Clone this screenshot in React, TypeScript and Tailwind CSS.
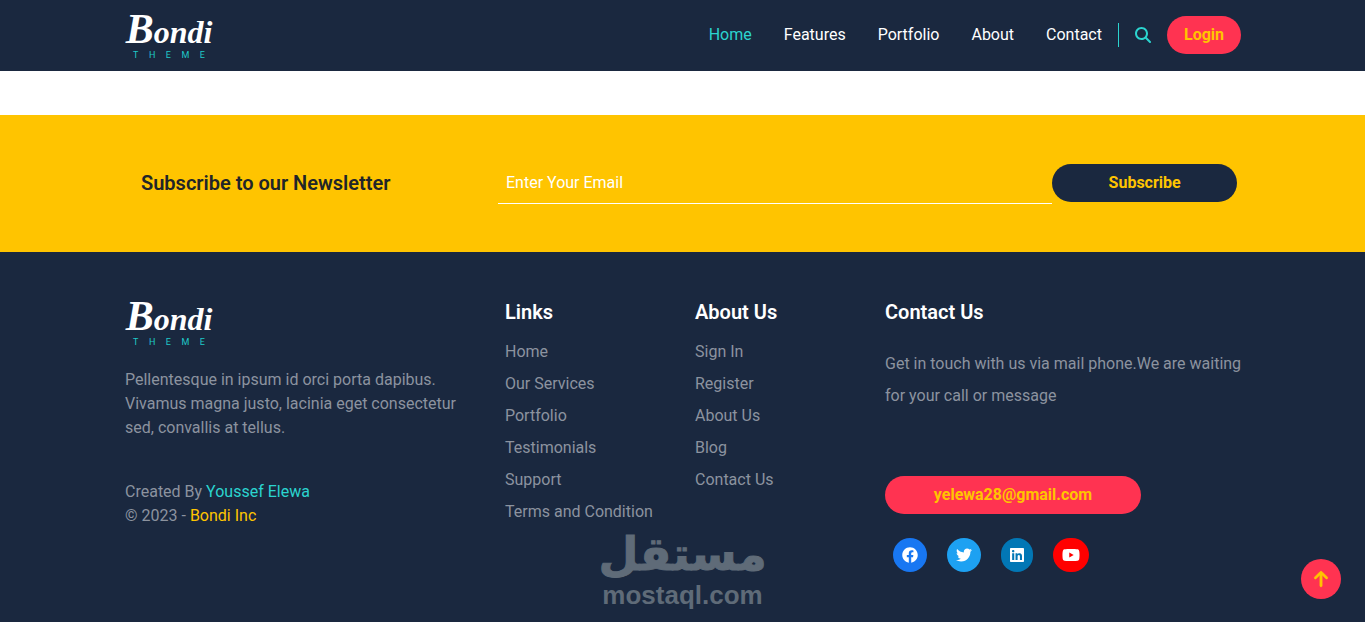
import React from "react";
import { FaFacebook, FaTwitter, FaLinkedin, FaYoutube } from "react-icons/fa";
import { FaMagnifyingGlass, FaArrowUp } from "react-icons/fa6";

const navItems = ["Home", "Features", "Portfolio", "About", "Contact"];
const links = ["Home", "Our Services", "Portfolio", "Testimonials", "Support", "Terms and Condition"];
const about = ["Sign In", "Register", "About Us", "Blog", "Contact Us"];
const socials = [
  { name: "Facebook", Icon: FaFacebook, button: "bg-[#1877f2]", icon: "w-4" },
  { name: "Twitter", Icon: FaTwitter, button: "bg-[#1da1f2]", icon: "w-4" },
  { name: "LinkedIn", Icon: FaLinkedin, button: "bg-[#0277b5]", icon: "w-3.5" },
  { name: "YouTube", Icon: FaYoutube, button: "bg-[#ff0000]", icon: "w-[18px]" },
];

function Logo() {
  return (
    <a href="#home" className="flex w-[88px] flex-col items-center">
      <span className="h-9 font-['Brush_Script_MT','Liberation_Serif',serif] text-[32px] leading-8 font-bold text-white italic">
        <span className="text-[42px] leading-8">B</span>ondi
      </span>
      <span aria-label="Theme" className="flex w-[72px] justify-between text-[9px] leading-3 text-[#1fc8c8]">
        {["T", "H", "E", "M", "E"].map((letter, i) => (
          <span key={i}>{letter}</span>
        ))}
      </span>
    </a>
  );
}

function LinkColumn({ title, items }: { title: string; items: string[] }) {
  return (
    <div className="col-span-2 px-3">
      <h2 className="mb-3 text-xl leading-6 font-semibold text-white">{title}</h2>
      <ul>
        {items.map((item) => (
          <li key={item} className="h-8 whitespace-nowrap py-1">
            <a href="#" className="hover:text-white">{item}</a>
          </li>
        ))}
      </ul>
    </div>
  );
}

export default function App() {
  return (
    <div className="flex min-h-screen flex-col bg-white font-['Roboto',sans-serif] text-base leading-6">
      <header className="bg-[#1a283f]">
        <div className="mx-auto flex max-w-[1141px] items-start justify-between pt-[13px] pr-3 pb-[10px] pl-[13px]">
          <Logo />
          <div className="mt-[3px] flex items-center gap-4">
            <nav className="flex gap-8">
              {navItems.map((item) => (
                <a key={item} href="#" className={item === "Home" ? "text-[#2bd4cf]" : "text-white"}>
                  {item}
                </a>
              ))}
            </nav>
            <span className="h-6 w-px bg-[#2bd4cf]" />
            <button aria-label="Search" className="text-[#2bd4cf]">
              <FaMagnifyingGlass className="size-4" />
            </button>
            <button className="h-[38px] rounded-full bg-[#ff3351] px-[17px] font-bold text-[#ffc400]">Login</button>
          </div>
        </div>
      </header>

      <section className="mt-11 bg-[#ffc400] py-12">
        <div className="mx-auto flex max-w-[1141px] items-start pr-4 pl-[29px]">
          <h2 className="mt-2 w-[357px] text-xl leading-6 font-semibold text-[#212529]">
            <label htmlFor="email">Subscribe to our Newsletter</label>
          </h2>
          <form className="flex flex-1 items-center">
            <input
              id="email"
              type="email"
              placeholder="Enter Your Email"
              className="h-[41px] w-3/4 border-b border-white bg-transparent px-2 pb-0.5 text-white outline-none placeholder:text-white"
            />
            <button
              type="button"
              className="mb-0.5 h-[38px] w-1/4 rounded-full bg-[#1a283f] font-bold text-[#ffc400]"
            >
              Subscribe
            </button>
          </form>
        </div>
      </section>

      <footer className="relative flex-1 bg-[#1a283f] pt-12 pb-10 text-[#8c939f]">
        <div className="mx-auto grid max-w-[1141px] grid-cols-12 pl-px">
          <div className="col-span-4 px-3">
            <Logo />
            <p className="mt-5">
              Pellentesque in ipsum id orci porta dapibus. Vivamus magna justo, lacinia eget consectetur sed, convallis at
              tellus.
            </p>
            <p className="mt-10">
              Created By <a href="#" className="text-[#2bd4cf]">Youssef Elewa</a>
            </p>
            <p>
              © 2023 - <a href="#" className="text-[#ffc400]">Bondi Inc</a>
            </p>
          </div>
          <LinkColumn title="Links" items={links} />
          <LinkColumn title="About Us" items={about} />
          <div className="col-span-4 pl-3">
            <h2 className="text-xl leading-6 font-semibold text-white">Contact Us</h2>
            <p className="mt-6 leading-8">
              Get in touch with us via mail phone.We are waiting for your call or message
            </p>
            <a
              href="mailto:yelewa28@gmail.com"
              className="mt-16 flex h-[38px] w-64 items-center justify-center rounded-full bg-[#ff3351] font-bold text-[#ffc400]"
            >
              yelewa28@gmail.com
            </a>
            <div className="mt-6 flex gap-5 px-2 text-white">
              {socials.map(({ name, Icon, button, icon }) => (
                <a key={name} href="#" aria-label={name} className={`rounded-full p-[9px] ${button}`}>
                  <Icon className={`h-4 ${icon}`} />
                </a>
              ))}
            </div>
          </div>
        </div>
        <div className="pointer-events-none absolute bottom-[13px] left-1/2 flex -translate-x-1/2 flex-col items-center font-bold text-[#5f6b78]">
          <span
            lang="ar"
            dir="rtl"
            className="font-['DejaVu_Sans',sans-serif] text-[46px] leading-[54px] [-webkit-text-stroke:1px_#5f6b78]"
          >
            مستقل
          </span>
          <span className="font-['Liberation_Sans',sans-serif] text-[26px] leading-7">mostaql.com</span>
        </div>
      </footer>

      <button
        aria-label="Back to top"
        className="fixed right-6 bottom-[23px] flex size-10 items-center justify-center rounded-full bg-[#ff3351] text-[#ffc400]"
      >
        <FaArrowUp className="size-[18px] stroke-[#ffc400] stroke-[16px]" />
      </button>
    </div>
  );
}
